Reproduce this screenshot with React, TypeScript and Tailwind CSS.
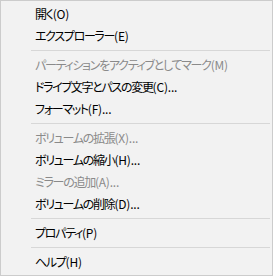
type Entry = { jp: string; key: string; disabled?: boolean } | 'sep';

const entries: Entry[] = [
  { jp: '開く', key: '(O)' },
  { jp: 'エクスプローラー', key: '(E)' },
  'sep',
  { jp: 'パーティションをアクティブとしてマーク', key: '(M)', disabled: true },
  { jp: 'ドライブ文字とパスの変更', key: '(C)...' },
  { jp: 'フォーマット', key: '(F)...' },
  'sep',
  { jp: 'ボリュームの拡張', key: '(X)...', disabled: true },
  { jp: 'ボリュームの縮小', key: '(H)...' },
  { jp: 'ミラーの追加', key: '(A)...', disabled: true },
  { jp: 'ボリュームの削除', key: '(D)...' },
  'sep',
  { jp: 'プロパティ', key: '(P)' },
  'sep',
  { jp: 'ヘルプ', key: '(H)' },
];

export default function App() {
  return (
    <div
      className="w-[273px] h-[276px] border border-[#cccccc] bg-[#f2f2f2] py-[2px] text-[12px] [font-feature-settings:'palt']"
      style={{ fontFamily: "'Noto Sans CJK JP', sans-serif" }}
    >
      {entries.map((e, i) =>
        e === 'sep' ? (
          <div key={i} className="h-[7px] flex items-center pl-[30px] pr-[2px]">
            <div className="h-px w-full bg-[#d7d7d7]" />
          </div>
        ) : (
          <div
            key={i}
            className={`h-[22px] flex items-center pl-[34px] whitespace-nowrap ${
              e.disabled ? 'text-[#8a8a8a]' : 'text-black'
            }`}
          >
            <span className="tracking-[-1.3px]">{e.jp}</span>
            <span className="tracking-[-0.2px]">{e.key}</span>
          </div>
        )
      )}
    </div>
  );
}
